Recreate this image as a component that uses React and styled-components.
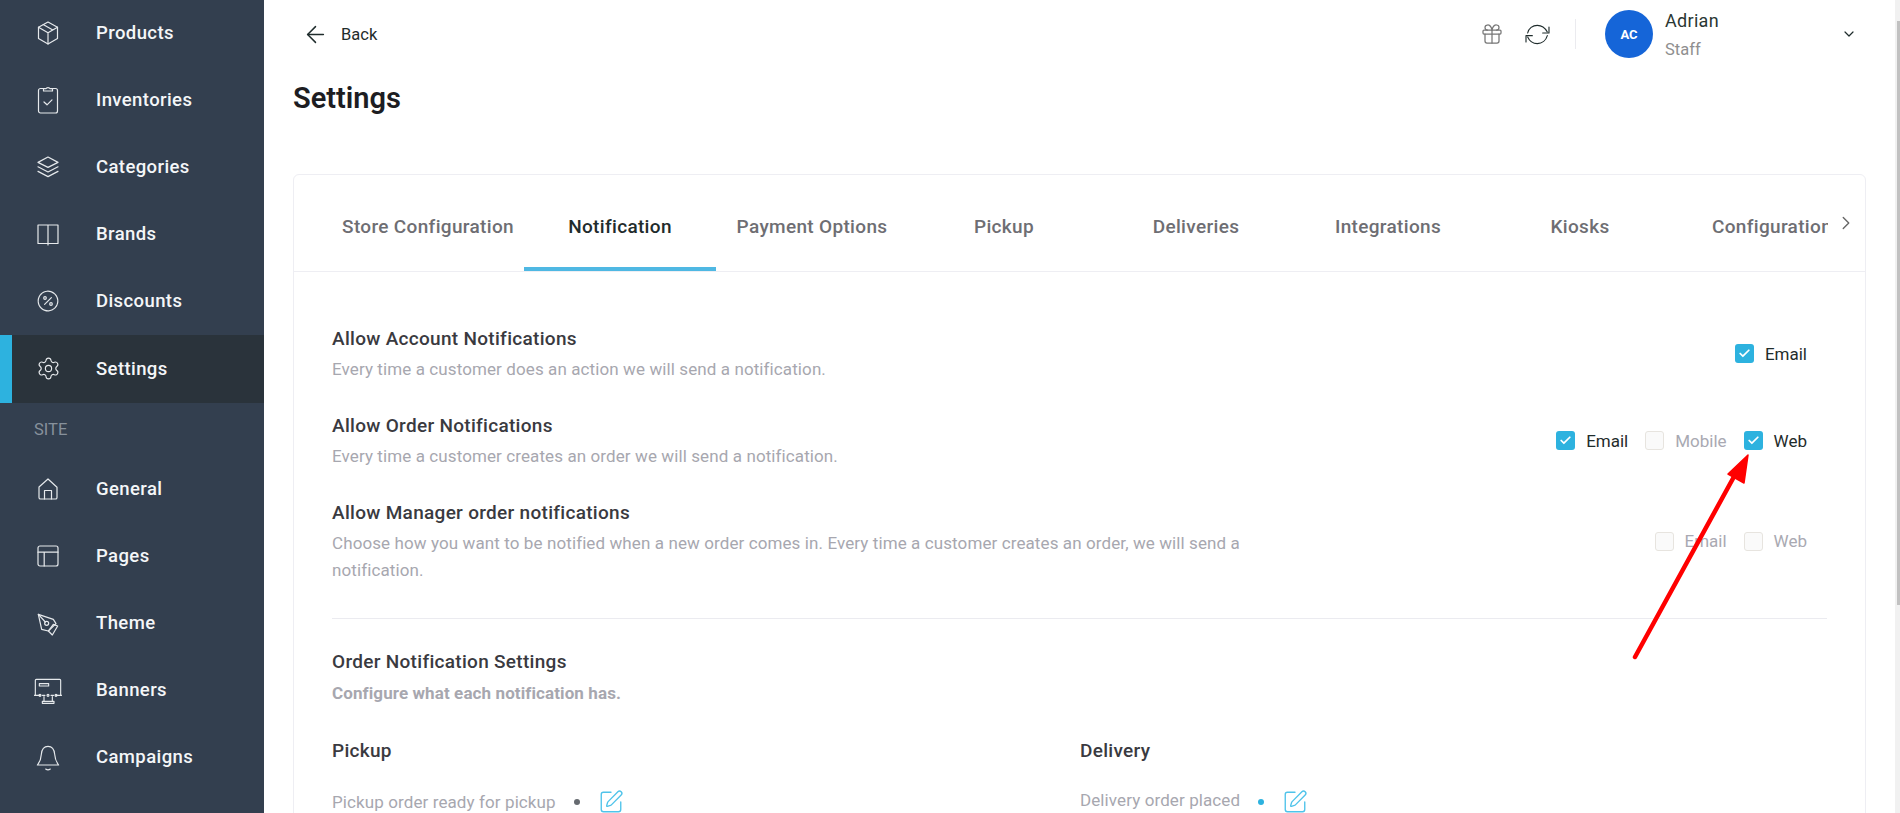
import React from "react";
import styled, { createGlobalStyle } from "styled-components";
import { ArrowLeft, Check, ChevronDown, ChevronRight, Gift, Settings as Gear, SquarePen } from "lucide-react";

const GlobalStyle = createGlobalStyle`
  html, body {
    margin: 0;
    padding: 0;
    height: 813px;
    overflow: hidden;
    background: #ffffff;
    font-family: Roboto, "Liberation Sans", sans-serif;
  }
  * { box-sizing: border-box; }
`;

const Line = ({ viewBox = "0 0 28 28", sw = 1.2, children }) => (
  <NavSvg viewBox={viewBox} fill="none" stroke="currentColor" strokeWidth={sw} strokeLinecap="round" strokeLinejoin="round">
    {children}
  </NavSvg>
);

const BoxIcon = () => (
  <Line>
    <path d="M14 3 23.5 8.2V19.6L14 25 4.5 19.6V8.2Z" />
    <path d="M4.5 8.2 14 13.8 23.5 8.2M14 13.8V25M9.2 5.6 18.8 11" />
  </Line>
);
const ClipboardIcon = () => (
  <Line>
    <rect x="4.5" y="2.5" width="19" height="24.5" rx="2" />
    <path d="M9.5 5V2.6h2.6C12.4 1.2 15.6 1.2 15.9 2.6h2.6V5Z" fill="#333f4f" />
    <path d="M10 16l3 2.8 5-5" />
  </Line>
);
const LayersIcon = () => (
  <Line>
    <path d="M14 4 24 9.4 14 14.4 4 9.4Z" />
    <path d="M4 13.8 14 19 24 13.8M4 18.4 14 23.6 24 18.4" />
  </Line>
);
const BookIcon = () => (
  <Line>
    <path d="M14 5H4V23.5H24V5ZM14 5V25" />
  </Line>
);
const PercentIcon = () => (
  <Line>
    <circle cx="14" cy="14" r="9.8" strokeDasharray="3.2 0.6" />
    <path d="M10.6 17.4 17.4 10.6" />
    <circle cx="11" cy="11" r="1.3" />
    <circle cx="17" cy="17" r="1.3" />
  </Line>
);
const HomeIcon = () => (
  <Line>
    <path d="M5 12 14 4 23 12.2V22.4C23 23.6 22.2 24 21.4 24H6.6C5.8 24 5 23.6 5 22.4Z" />
    <path d="M10.5 24V15.5H17.5V24" />
  </Line>
);
const LayoutIcon = () => (
  <Line>
    <rect x="4" y="4" width="20" height="20" rx="2" />
    <path d="M4 10.2H24M10.2 10.2V24" />
  </Line>
);
const NibIcon = () => (
  <Line viewBox="42 24 84 84" sw={3.6}>
    <path d="M55 40 100 55 108 68 85 90 65 85Z" />
    <path d="M55 40 76 63" />
    <circle cx="80" cy="67" r="6" />
    <path d="M113 75 97 102 85 90 100 70Z" />
  </Line>
);
const ScreenIcon = () => (
  <Line viewBox="102 825 84 84" sw={3.4}>
    <path d="M106 882V838Q106 835 109 835H179Q182 835 182 838V882" />
    <rect x="118" y="848" width="28" height="7" />
    <path d="M103 883H120M168 883H185M127 883H135M153 883H161" />
    <circle cx="144" cy="883" r="3" />
    <circle cx="120" cy="883" r="3" />
    <circle cx="168" cy="883" r="3" />
    <path d="M132 887V900M157 887V900M127 907H162V901H127Z" />
  </Line>
);
const BellIcon = () => (
  <Line viewBox="102 1026 84 84" sw={3.4}>
    <path d="M144 1036C130 1036 125 1048 124 1060 123 1075 118 1085 112 1092H176C170 1085 165 1075 164 1060 163 1048 158 1036 144 1036Z" />
    <path d="M137 1104Q144 1109 151 1104" />
  </Line>
);

const RefreshIcon = () => (
  <RefreshSvg viewBox="252 64 80 80" fill="none" stroke="#1f2c2c" strokeWidth="3.4" strokeLinecap="round" strokeLinejoin="round">
    <path d="M263 100C266 86 278 77 292 77 305 77 316 86 322 97" />
    <path d="M327 82V100H308" />
    <path d="M322 108C318 122 306 132 292 132 279 132 268 123 263 112" />
    <path d="M258 127V108H277" />
  </RefreshSvg>
);

const topItems = [
  ["Products", BoxIcon],
  ["Inventories", ClipboardIcon],
  ["Categories", LayersIcon],
  ["Brands", BookIcon],
  ["Discounts", PercentIcon],
];
const siteItems = [
  ["General", HomeIcon],
  ["Pages", LayoutIcon],
  ["Theme", NibIcon],
  ["Banners", ScreenIcon],
  ["Campaigns", BellIcon],
];
const tabs = ["Store Configuration", "Notification", "Payment Options", "Pickup", "Deliveries", "Integrations", "Kiosks", "Configuration"];

function Option({ label, checked }) {
  return (
    <OptionLabel $checked={checked}>
      <CheckBox $checked={checked}>{checked && <Check size={13} strokeWidth={3.2} color="#fff" />}</CheckBox>
      {label}
    </OptionLabel>
  );
}

function App() {
  return (
    <>
      <GlobalStyle />
      <Page>
        <Sidebar>
          {topItems.map(([label, Icon]) => (
            <NavItem key={label}>
              <IconSlot><Icon /></IconSlot>
              {label}
            </NavItem>
          ))}
          <NavItem $active>
            <IconSlot><Gear size={25} strokeWidth={1.1} /></IconSlot>
            Settings
          </NavItem>
          <SectionLabel>SITE</SectionLabel>
          {siteItems.map(([label, Icon]) => (
            <NavItem key={label}>
              <IconSlot><Icon /></IconSlot>
              {label}
            </NavItem>
          ))}
        </Sidebar>

        <Main>
          <TopBar>
            <BackLink>
              <ArrowLeft size={27} strokeWidth={1.3} />
              Back
            </BackLink>
            <TopActions>
              <GiftSlot><Gift size={24} strokeWidth={1.25} color="#777" /></GiftSlot>
              <RefreshIcon />
              <Separator />
              <Avatar>AC</Avatar>
              <UserInfo>
                <UserName>Adrian</UserName>
                <UserRole>Staff</UserRole>
              </UserInfo>
              <ChevronDown size={16} strokeWidth={1.8} color="#1f2c2c" />
            </TopActions>
          </TopBar>

          <Title>Settings</Title>

          <Card>
            <TabBar>
              <TabScroller>
                {tabs.map((t) => (
                  <Tab key={t} $active={t === "Notification"}>{t}</Tab>
                ))}
              </TabScroller>
              <TabArrow><ChevronRight size={22} strokeWidth={1.5} color="#666" /></TabArrow>
            </TabBar>

            <CardBody>
              <SettingRow>
                <SettingText>
                  <SettingTitle>Allow Account Notifications</SettingTitle>
                  <SettingDesc>Every time a customer does an action we will send a notification.</SettingDesc>
                </SettingText>
                <Options>
                  <Option label="Email" checked />
                </Options>
              </SettingRow>
              <SettingRow>
                <SettingText>
                  <SettingTitle>Allow Order Notifications</SettingTitle>
                  <SettingDesc>Every time a customer creates an order we will send a notification.</SettingDesc>
                </SettingText>
                <Options>
                  <Option label="Email" checked />
                  <Option label="Mobile" />
                  <Option label="Web" checked />
                </Options>
              </SettingRow>
              <SettingRow>
                <SettingText>
                  <SettingTitle>Allow Manager order notifications</SettingTitle>
                  <SettingDesc>
                    Choose how you want to be notified when a new order comes in. Every time a customer creates an order, we will send a notification.
                  </SettingDesc>
                </SettingText>
                <Options>
                  <Option label="Email" />
                  <Option label="Web" />
                </Options>
              </SettingRow>

              <Divider />

              <SettingTitle>Order Notification Settings</SettingTitle>
              <SubNote>Configure what each notification has.</SubNote>

              <Columns>
                <div>
                  <SettingTitle>Pickup</SettingTitle>
                  <NotifyLine>
                    <NotifyName>Pickup order ready for pickup</NotifyName>
                    <Dot $color="#666a70" />
                    <SquarePen size={26} strokeWidth={1.25} color="#4fc3ea" />
                  </NotifyLine>
                </div>
                <div>
                  <SettingTitle>Delivery</SettingTitle>
                  <NotifyLine>
                    <NotifyName $lift>Delivery order placed</NotifyName>
                    <Dot $color="#2db2df" />
                    <SquarePen size={26} strokeWidth={1.25} color="#4fc3ea" />
                  </NotifyLine>
                </div>
              </Columns>
            </CardBody>
          </Card>
        </Main>

        <ScrollTrack>
          <ScrollThumb />
        </ScrollTrack>

        <Annotation viewBox="0 0 1900 813" fill="none">
          <path d="M1635 657 1736 473" stroke="#ff0000" strokeWidth="4.5" strokeLinecap="round" />
          <path d="M1748 455 1744 483 1728 474Z" fill="#ff0000" stroke="#ff0000" strokeWidth="1.5" strokeLinejoin="round" />
        </Annotation>
      </Page>
    </>
  );
}

const Page = styled.div`
  position: relative;
  display: flex;
  width: 1900px;
  height: 813px;
  overflow: hidden;
`;

const Sidebar = styled.nav`
  flex: 0 0 264px;
  margin-top: -1px;
  background: #333f4f;
  color: #f4f6f8;
`;

const NavItem = styled.div`
  display: flex;
  align-items: center;
  height: ${(p) => (p.$active ? "68px" : "67px")};
  margin-top: ${(p) => (p.$active ? "1px" : "0")};
  padding-left: ${(p) => (p.$active ? "22px" : "34px")};
  padding-bottom: ${(p) => (p.$active ? "1px" : "0")};
  border-left: ${(p) => (p.$active ? "12px solid #2db2df" : "none")};
  background: ${(p) => (p.$active ? "#2a333b" : "transparent")};
  font-size: 18.5px;
  font-weight: 480;
  letter-spacing: 0.4px;
`;

const IconSlot = styled.span`
  display: flex;
  align-items: center;
  justify-content: center;
  width: 28px;
  height: 28px;
  margin-right: 34px;
  color: #e6e9ec;
`;

const NavSvg = styled.svg`
  width: 28px;
  height: 28px;
`;

const SectionLabel = styled.div`
  display: flex;
  align-items: center;
  height: 52px;
  padding-left: 34px;
  font-size: 16.5px;
  color: #87919c;
`;

const Main = styled.main`
  flex: 1;
  min-width: 0;
  padding: 0 29px;
`;

const TopBar = styled.header`
  display: flex;
  align-items: center;
  justify-content: space-between;
  height: 68px;
  padding: 0 9px;
`;

const BackLink = styled.div`
  display: flex;
  align-items: center;
  gap: 12px;
  font-size: 16.5px;
  color: #1f2c2c;
`;

const TopActions = styled.div`
  display: flex;
  align-items: center;
`;

const GiftSlot = styled.span`
  display: flex;
  margin-right: 20px;
`;

const RefreshSvg = styled.svg`
  width: 26.67px;
  height: 26.67px;
`;

const Separator = styled.span`
  width: 1px;
  height: 30px;
  margin: 0 29px 0 24px;
  background: #ebebef;
`;

const Avatar = styled.div`
  display: flex;
  align-items: center;
  justify-content: center;
  width: 48px;
  height: 48px;
  border-radius: 50%;
  background: #1565d8;
  color: #ffffff;
  font-size: 13px;
  font-weight: 700;
`;

const UserInfo = styled.div`
  width: 176px;
  margin-left: 12px;
`;

const UserName = styled.div`
  margin-top: 2px;
  font-size: 18px;
  line-height: 24px;
  color: #2a3733;
  letter-spacing: 0.3px;
`;

const UserRole = styled.div`
  margin-top: 5px;
  font-size: 16.5px;
  line-height: 24px;
  color: #8f8f8f;
`;

const Title = styled.h1`
  margin: 12px 0 0;
  height: 94px;
  font-size: 29px;
  line-height: 36px;
  font-weight: 600;
  color: #1d1d22;
`;

const Card = styled.section`
  height: 700px;
  border: 1px solid #eeeef3;
  border-radius: 6px 6px 0 0;
`;

const TabBar = styled.div`
  display: flex;
  height: 97px;
  padding-left: 38px;
  border-bottom: 1px solid #eeeef3;
`;

const TabScroller = styled.div`
  display: flex;
  width: 1496px;
  overflow: hidden;
`;

const Tab = styled.div`
  flex: 0 0 192px;
  display: flex;
  align-items: center;
  justify-content: center;
  border-bottom: 4px solid ${(p) => (p.$active ? "#4fb8e3" : "transparent")};
  padding-top: 11px;
  font-size: 19px;
  font-weight: 480;
  letter-spacing: 0.33px;
  white-space: nowrap;
  color: ${(p) => (p.$active ? "#1f2c2c" : "#6e6e73")};
`;

const TabArrow = styled.div`
  display: flex;
  align-items: center;
  padding: 0 0 1px 7px;
`;

const CardBody = styled.div`
  padding: 54px 38px 0;
`;

const SettingRow = styled.div`
  display: flex;
  align-items: center;
  justify-content: space-between;
  padding-right: 20px;
  margin-bottom: 30px;
`;

const SettingText = styled.div`
  max-width: 980px;
`;

const SettingTitle = styled.div`
  padding-top: 1px;
  font-size: 19px;
  line-height: 24px;
  font-weight: 480;
  letter-spacing: 0.3px;
  color: #3a3a3f;
`;

const SettingDesc = styled.div`
  margin-top: 5px;
  font-size: 17px;
  line-height: 27px;
  letter-spacing: 0.1px;
  color: #a7a7af;
`;

const Options = styled.div`
  display: flex;
  align-items: center;
  gap: 17px;
  padding-bottom: 2px;
`;

const OptionLabel = styled.label`
  display: flex;
  align-items: center;
  gap: 11px;
  font-size: 17px;
  color: ${(p) => (p.$checked ? "#1f2c2c" : "#a9a9b2")};
`;

const CheckBox = styled.span`
  display: flex;
  align-items: center;
  justify-content: center;
  width: 19px;
  height: 19px;
  border-radius: 3px;
  background: ${(p) => (p.$checked ? "#2db2df" : "#fafafa")};
  border: ${(p) => (p.$checked ? "none" : "1px solid #e7e4df")};
`;

const Divider = styled.hr`
  margin: 34px 0 30px;
  border: 0;
  border-top: 1px solid #ebebf0;
`;

const SubNote = styled.div`
  margin-top: 7px;
  font-size: 17px;
  line-height: 24px;
  font-weight: 700;
  letter-spacing: 0.1px;
  color: #a7a7af;
`;

const Columns = styled.div`
  display: grid;
  grid-template-columns: 748px 1fr;
  margin-top: 33px;
`;

const NotifyLine = styled.div`
  display: flex;
  align-items: center;
  margin-top: 26px;
`;

const NotifyName = styled.span`
  margin-bottom: ${(p) => (p.$lift ? "4px" : "0")};
  font-size: 17px;
  letter-spacing: 0.1px;
  color: #a7a7af;
`;

const Dot = styled.span`
  width: 6px;
  height: 6px;
  margin: 0 18px 0 18px;
  border-radius: 50%;
  background: ${(p) => p.$color};
`;

const ScrollTrack = styled.div`
  flex: 0 0 5px;
  padding: 21px 0 0 2px;
  background: #f1f1f1;
`;

const ScrollThumb = styled.div`
  height: 584px;
  background: #c1c1c1;
`;

const Annotation = styled.svg`
  position: absolute;
  left: 0;
  top: 0;
  width: 1900px;
  height: 813px;
  pointer-events: none;
`;

export default App;
